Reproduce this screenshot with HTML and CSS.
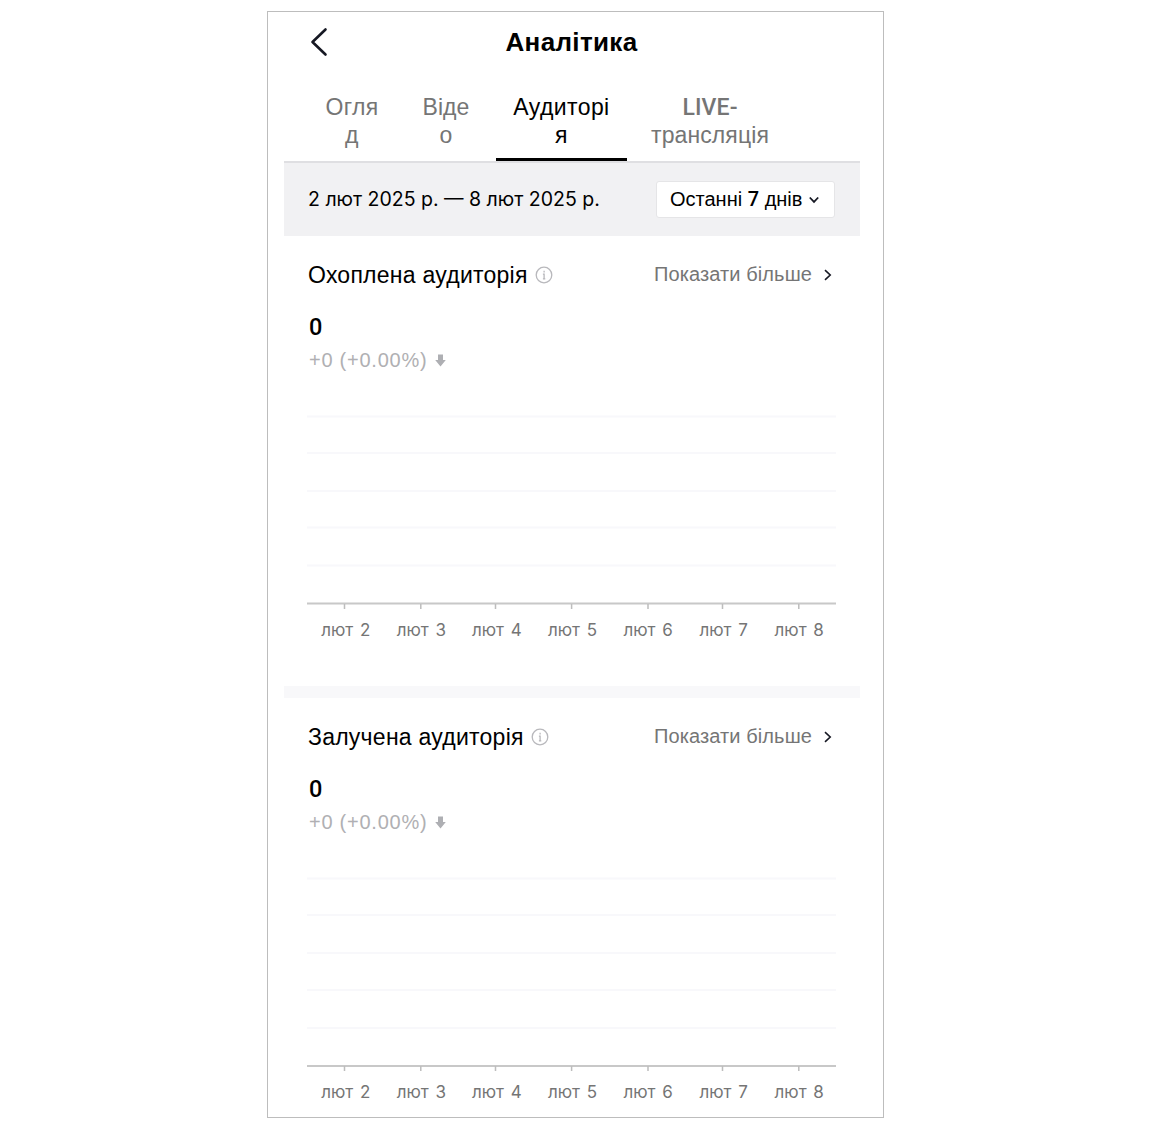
FILE: index.html
```html
<!DOCTYPE html>
<html lang="uk">
<head>
	<meta charset="UTF-8" />
	<meta name="viewport" content="width=device-width, initial-scale=1" />

	<title>Аналітика</title>

	<link rel="stylesheet" href="styles.css">
</head>
<body>
	<div class="container">
		<div class="header">
			<svg class="back" width="18" height="30" viewBox="0 0 18 30"><path d="M15.5 2.5 L2.5 15 L15.5 27.5" /></svg>
			<h1>Аналітика</h1>
		</div>

		<div class="tabs">
			<div class="tab tab_first">Огля<br>д</div>
			<div class="tab tab_video">Віде<br>о</div>
			<div class="tab tab_audience active">Аудиторі<br>я</div>
			<div class="tab tab_live"><span class="live">LIVE-</span><br>трансляція</div>
		</div>

		<div class="period">
			<div class="dates">2 лют 2025 р. — 8 лют 2025 р.</div>
			<div class="select">
				<span>Останні <b>7</b> днів</span>
				<svg width="12" height="10" viewBox="0 0 12 10"><path d="M1.8 2.5 L6 6.9 L10.2 2.5" /></svg>
			</div>
		</div>

		<div class="card">
			<div class="card_title">
				<h2>Охоплена аудиторія</h2>
				<svg class="info" width="18" height="18" viewBox="0 0 18 18"><circle cx="9" cy="9" r="7.8" /><path d="M9.1 4.8v1.6M7.9 8.2H9.1v4.7M7.9 12.9h2.4" /></svg>
				<div class="more">Показати більше</div>
				<svg class="arrow" width="8" height="12" viewBox="0 0 8 12"><path d="M1 1.2 L6.2 6 L1 10.8" /></svg>
			</div>
			<div class="value">0</div>
			<div class="change">
				<span>+0 (+0.00%)</span>
				<svg width="11" height="13" viewBox="0 0 11 13"><path d="M3 0.5h5v5.5h2.8L5.5 12.5 0.2 6H3z" /></svg>
			</div>
			<svg class="chart" width="529" height="196" viewBox="0 0 529 196">
				<path class="grid" d="M0 4.5H529M0 41H529M0 79H529M0 115.5H529M0 153.5H529" />
				<path class="axis" d="M0 191.5H529" />
				<path class="tick" d="M37.5 192v5M113.8 192v5M188.5 192v5M264.6 192v5M341 192v5M415.5 192v5M491.8 192v5" />
			</svg>
			<div class="labels">
				<span>лют 2</span><span>лют 3</span><span>лют 4</span><span>лют 5</span><span>лют 6</span><span>лют 7</span><span>лют 8</span>
			</div>
		</div>

		<div class="divider"></div>

		<div class="card">
			<div class="card_title">
				<h2>Залучена аудиторія</h2>
				<svg class="info" width="18" height="18" viewBox="0 0 18 18"><circle cx="9" cy="9" r="7.8" /><path d="M9.1 4.8v1.6M7.9 8.2H9.1v4.7M7.9 12.9h2.4" /></svg>
				<div class="more">Показати більше</div>
				<svg class="arrow" width="8" height="12" viewBox="0 0 8 12"><path d="M1 1.2 L6.2 6 L1 10.8" /></svg>
			</div>
			<div class="value">0</div>
			<div class="change">
				<span>+0 (+0.00%)</span>
				<svg width="11" height="13" viewBox="0 0 11 13"><path d="M3 0.5h5v5.5h2.8L5.5 12.5 0.2 6H3z" /></svg>
			</div>
			<svg class="chart" width="529" height="196" viewBox="0 0 529 196">
				<path class="grid" d="M0 4.5H529M0 41H529M0 79H529M0 116H529M0 154H529" />
				<path class="axis" d="M0 192H529" />
				<path class="tick" d="M37.5 192v5M113.8 192v5M188.5 192v5M264.6 192v5M341 192v5M415.5 192v5M491.8 192v5" />
			</svg>
			<div class="labels">
				<span>лют 2</span><span>лют 3</span><span>лют 4</span><span>лют 5</span><span>лют 6</span><span>лют 7</span><span>лют 8</span>
			</div>
		</div>
	</div>
</body>
</html>
```
FILE: styles.css
```css
body{
	margin: 0;
	background-color: #fff;
	font-family: "Liberation Sans", Arial, sans-serif;
	color: #000;
}

svg{
	display: block;
	flex: none;
	fill: none;
}

.container{
	box-sizing: border-box;
	width: 617px;
	height: 1107px;
	margin: 11px 0 0 267px;
	padding: 0 23px 0 16px;
	border: 1px solid #bdbdbd;
	overflow: hidden;
}

.header{
	display: grid;
	grid-template-columns: 50px 1fr 51px;
	align-items: center;
	height: 60px;
	padding-bottom: 1px;
}

.back{
	margin-left: 26px;
	stroke: #161823;
	stroke-width: 2.6;
	stroke-linecap: round;
	stroke-linejoin: round;
}

h1{
	margin: 0;
	text-align: center;
	font-size: 26px;
	line-height: 30px;
	letter-spacing: 0.35px;
}

.tabs{
	display: flex;
	box-sizing: border-box;
	height: 90px;
	padding-left: 24px;
	border-bottom: 2px solid #dfdfe2;
}

.tab{
	box-sizing: border-box;
	height: 88px;
	padding-top: 20px;
	text-align: center;
	font-size: 23px;
	line-height: 28px;
	letter-spacing: 0.1px;
	color: #757575;
	white-space: nowrap;
}

.tab_first{
	width: 88px;
	letter-spacing: 0.4px;
}

.tab_video{
	width: 100px;
}

.tab_audience{
	width: 131px;
	letter-spacing: 0.4px;
}

.tab_live{
	width: 166px;
}

.active{
	color: #000;
	border-bottom: 3px solid #000;
}

/* same line box as the second row, so the tab keeps its height */
.live{
	font-family: Roboto, sans-serif;
	font-weight: 500;
	line-height: 1;
}

.period{
	display: flex;
	align-items: center;
	justify-content: space-between;
	height: 73px;
	padding: 0 25px 0 24px;
	background-color: #f1f1f3;
}

.dates{
	padding-bottom: 2px;
	font-family: Inter, "Liberation Sans", sans-serif;
	font-size: 19.5px;
}

.select{
	display: flex;
	align-items: center;
	gap: 6px;
	box-sizing: border-box;
	width: 179px;
	height: 37px;
	padding-left: 13px;
	border: 1px solid #e5e5e7;
	border-radius: 3px;
	background-color: #fff;
	font-size: 20px;
	white-space: nowrap;
}

.select span{
	padding-bottom: 2px;
}

.select b{
	font-family: Roboto, sans-serif;
	font-weight: 500;
}

.select path{
	stroke: #161823;
	stroke-width: 1.8;
}

.card{
	box-sizing: border-box;
	height: 450px;
	padding: 24px 24px 0;
}

.card_title{
	display: flex;
	align-items: center;
	height: 30px;
}

h2{
	margin: 0;
	font-size: 23px;
	font-weight: normal;
	letter-spacing: 0.25px;
	white-space: nowrap;
}

.info{
	margin-left: 7px;
	stroke: #b8b8bc;
	stroke-width: 1.3;
}

.more{
	margin-left: auto;
	padding-bottom: 1px;
	font-size: 20px;
	letter-spacing: 0.1px;
	color: #757575;
	white-space: nowrap;
}

.arrow{
	margin: 0 4px 0 12px;
	stroke: #161823;
	stroke-width: 1.6;
}

.value{
	height: 30px;
	margin: 22px 0 0 1px;
	font-family: Roboto, sans-serif;
	font-size: 23.5px;
	font-weight: 500;
	line-height: 30px;
}

.change{
	display: flex;
	align-items: center;
	gap: 8px;
	height: 26px;
	margin: 5px 0 0 1px;
	font-size: 20px;
	letter-spacing: 0.75px;
	color: #b0b0b3;
}

.change path{
	fill: #aeafb3;
}

.chart{
	margin: 39px 0 0 -1px;
	overflow: visible;
}

.grid{
	stroke: #f8f8fb;
	stroke-width: 2;
}

.axis{
	stroke: #c8c8c8;
	stroke-width: 2;
}

.tick{
	stroke: #bdbdbd;
	stroke-width: 1.5;
}

.labels{
	display: grid;
	grid-template-columns: repeat(7, 1fr);
	width: 529px;
	margin: 10px 0 0;
	text-align: center;
	font-family: Inter, "Liberation Sans", sans-serif;
	font-size: 17px;
	line-height: 24px;
	word-spacing: 2px;
	color: #757575;
}

.divider{
	height: 12px;
	background-color: #f8f8fa;
}
```
